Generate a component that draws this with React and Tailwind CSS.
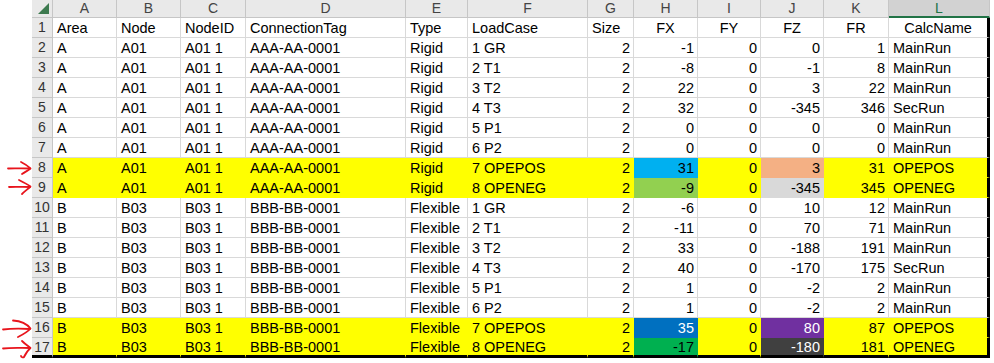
import React from "react";

const COLS = "grid-cols-[21px_64px_64px_65px_160px_62px_120px_46px_64px_63px_63px_65px_101px]";

const letters = ["A", "B", "C", "D", "E", "F", "G", "H", "I", "J", "K", "L"];

const Y = "#ffff00";

const rows = [
  { d: ["Area", "Node", "NodeID", "ConnectionTag", "Type", "LoadCase", "Size", "FX", "FY", "FZ", "FR", "CalcName"], head: true },
  { d: ["A", "A01", "A01 1", "AAA-AA-0001", "Rigid", "1 GR", 2, -1, 0, 0, 1, "MainRun"] },
  { d: ["A", "A01", "A01 1", "AAA-AA-0001", "Rigid", "2 T1", 2, -8, 0, -1, 8, "MainRun"] },
  { d: ["A", "A01", "A01 1", "AAA-AA-0001", "Rigid", "3 T2", 2, 22, 0, 3, 22, "MainRun"] },
  { d: ["A", "A01", "A01 1", "AAA-AA-0001", "Rigid", "4 T3", 2, 32, 0, -345, 346, "SecRun"] },
  { d: ["A", "A01", "A01 1", "AAA-AA-0001", "Rigid", "5 P1", 2, 0, 0, 0, 0, "MainRun"] },
  { d: ["A", "A01", "A01 1", "AAA-AA-0001", "Rigid", "6 P2", 2, 0, 0, 0, 0, "MainRun"] },
  { d: ["A", "A01", "A01 1", "AAA-AA-0001", "Rigid", "7 OPEPOS", 2, 31, 0, 3, 31, "OPEPOS"], y: true, h: "bg-[#00b0f0] border-[#00b0f0]", j: "bg-[#f4b084] border-[#f4b084]" },
  { d: ["A", "A01", "A01 1", "AAA-AA-0001", "Rigid", "8 OPENEG", 2, -9, 0, -345, 345, "OPENEG"], y: true, h: "bg-[#92d050] border-[#92d050]", j: "bg-[#d9d9d9] border-[#d9d9d9]" },
  { d: ["B", "B03", "B03 1", "BBB-BB-0001", "Flexible", "1 GR", 2, -6, 0, 10, 12, "MainRun"] },
  { d: ["B", "B03", "B03 1", "BBB-BB-0001", "Flexible", "2 T1", 2, -11, 0, 70, 71, "MainRun"] },
  { d: ["B", "B03", "B03 1", "BBB-BB-0001", "Flexible", "3 T2", 2, 33, 0, -188, 191, "MainRun"] },
  { d: ["B", "B03", "B03 1", "BBB-BB-0001", "Flexible", "4 T3", 2, 40, 0, -170, 175, "SecRun"] },
  { d: ["B", "B03", "B03 1", "BBB-BB-0001", "Flexible", "5 P1", 2, 1, 0, -2, 2, "MainRun"] },
  { d: ["B", "B03", "B03 1", "BBB-BB-0001", "Flexible", "6 P2", 2, 1, 0, -2, 2, "MainRun"] },
  { d: ["B", "B03", "B03 1", "BBB-BB-0001", "Flexible", "7 OPEPOS", 2, 35, 0, 80, 87, "OPEPOS"], y: true, h: "bg-[#0070c0] border-[#0070c0] text-white", j: "bg-[#7030a0] border-[#7030a0] text-white" },
  { d: ["B", "B03", "B03 1", "BBB-BB-0001", "Flexible", "8 OPENEG", 2, -17, 0, -180, 181, "OPENEG"], y: true, h: "bg-[#00b050] border-[#00b050]", j: "bg-[#404040] border-[#404040] text-white" },
];

function Arrows() {
  return (
    <svg className="absolute left-0 top-0" width="34" height="363" viewBox="0 0 34 363" fill="none" stroke="#e8141c" strokeWidth="1.8" strokeLinecap="round" strokeLinejoin="round">
      <path d="M8 168.5 C14 168 22 168.5 30 168.5" />
      <path d="M21 162 C25 164 28 166 30.5 168.5 C28 170.5 25 172 22 174" />
      <path d="M9 187 C15 186.5 23 187 30 187" />
      <path d="M19 180 C23 182 27 184 30.5 186.5 C28 189 25 191 22 194" />
      <path d="M3 329.5 C11 328.5 20 328.5 30 329" />
      <path d="M13 320.5 C20 321 27 324 30.5 328.5 C28 331.5 24 334 18 337" />
      <path d="M3 348.5 C11 347.5 20 348 30 348" />
      <path d="M22 341 C25 344 28 346 30.5 348 C28 350 26 353 24 357 C23 358 21 357 21 356" />
    </svg>
  );
}

export default function App() {
  const font = { fontFamily: '"Liberation Sans", Arial, sans-serif' };
  return (
    <div className="relative w-[994px] h-[363px] bg-white overflow-hidden" style={font}>
      <Arrows />
      <div className={`ml-[32px] grid ${COLS} w-[958px]`}>
        {/* header row */}
        <div className="h-[18px] bg-[#e9e9e9] border-r border-b border-[#c6c6c6] relative flex items-end justify-end pr-[3px] pb-[3px]">
          <svg width="11" height="11" viewBox="0 0 11 11"><path d="M11 0 L11 11 L0 11 Z" fill="#3d7a4f" /></svg>
        </div>
        {letters.map((l) =>
          l === "L" ? (
            <div key={l} className="h-[18px] bg-[#d2d2d2] border-r border-[#c6c6c6] border-b-2 border-b-[#217346] text-[#217346] text-[14px] leading-[16px] text-center">
              {l}
            </div>
          ) : (
            <div key={l} className="h-[18px] bg-[#e9e9e9] border-r border-b border-[#c6c6c6] text-[#444444] text-[14px] leading-[17px] text-center">
              {l}
            </div>
          )
        )}
        {rows.map((r, ri) => {
          const last = ri === rows.length - 1;
          const cells = [];
          cells.push(
            <div
              key="rh"
              className={
                last
                  ? "h-[20px] bg-[#e9e9e9] border-r border-r-[#c6c6c6] border-b-[3px] border-b-black text-[#333] text-[14px] leading-[19px] text-center"
                  : "h-[20px] bg-[#e9e9e9] border-r border-b border-[#c6c6c6] text-[#333] text-[14px] leading-[19px] text-center"
              }
            >
              {ri + 1}
            </div>
          );
          r.d.forEach((v, ci) => {
            const isNum = typeof v === "number";
            const isL = ci === 11;
            let fill = r.y ? "bg-[#ffff00] border-[#ffff00]" : "bg-white border-[#d9d9d9]";
            if (r.h && ci === 7) fill = r.h;
            if (r.j && ci === 9) fill = r.j;
            let align = isNum ? "text-right pr-[3px]" : "text-left pl-[4px]";
            if (r.head && ci >= 7) align = "text-center";
            const right = isL ? "border-r-[3px] border-r-black" : "border-r";
            const bottom = last ? "border-b-[3px] border-b-black" : "border-b";
            cells.push(
              <div
                key={ci}
                className={`${last ? "h-[20px] leading-[18px]" : "h-[20px] leading-[20px]"} ${fill} ${right} ${bottom} ${align} text-[14.5px] text-black whitespace-nowrap overflow-hidden`}
              >
                {v}
              </div>
            );
          });
          return <React.Fragment key={ri}>{cells}</React.Fragment>;
        })}
      </div>
    </div>
  );
}
